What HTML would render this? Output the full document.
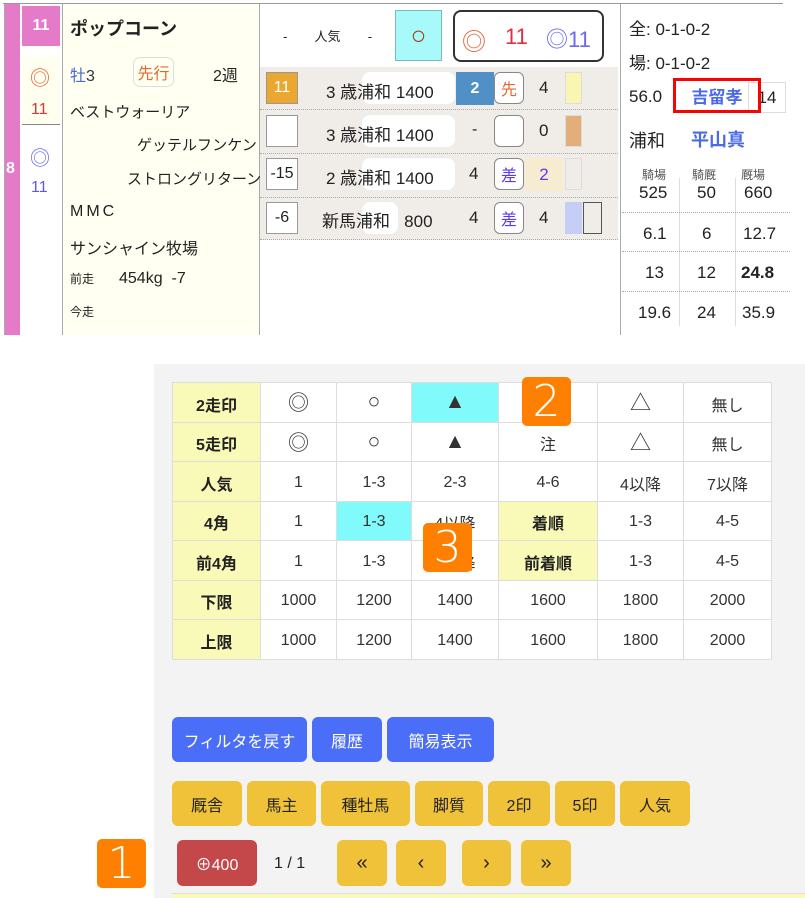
<!DOCTYPE html>
<html><head><meta charset="utf-8"><style>
*{margin:0;padding:0;box-sizing:border-box}
body{width:805px;height:898px;background:#fff;font-family:"Liberation Sans","Noto Sans CJK JP",sans-serif;color:#222;position:relative;overflow:hidden}
.a{position:absolute;white-space:nowrap}
.c{display:flex;align-items:center;justify-content:center}
table{border-collapse:collapse;position:absolute;left:172px;top:382px}
td{border:1px solid #ddd;background:#fff;text-align:center;font-size:16px;height:39.5px;color:#333;padding-top:3px}
td.h{background:#fafab8;font-weight:bold;color:#222}
td.g{font-size:21px;padding-top:0}
.btn{position:absolute;border-radius:6px;display:flex;align-items:center;justify-content:center;font-size:16px}
.b{background:#4a6ef7;color:#fff;top:717px;height:45px}
.y{background:#f0c23a;color:#222;top:781px;height:45px}
.n{background:#f0c23a;color:#222;top:840px;height:46px;font-size:20px}
.badge{position:absolute;width:49px;height:49px;background:#ff8000;color:#fff;border-radius:5px;font-size:44px;display:flex;align-items:center;justify-content:center;font-family:"DejaVu Sans",sans-serif;font-weight:300}
.box{position:absolute;width:32px;height:32px;border:1px solid #999;background:#fff;font-size:16px}
.pill{position:absolute;background:#fff;border-radius:8px;height:32px}
.rb{position:absolute;width:30px;height:32px;border:1px solid #888;border-radius:6px;background:#fff;font-size:16px}
</style></head><body>
<div class="a" style="left:3px;top:3px;width:780px;height:1px;background:#999"></div>
<div class="a" style="left:4px;top:4px;width:16px;height:331px;background:#e57bc8;border-left:1px solid #aaa"></div>
<div class="a" style="left:6px;top:160px;color:#fff;font-size:16px;font-weight:bold">8</div>
<div class="a c" style="left:22px;top:6px;width:38px;height:40px;background:#e57bc8;color:#fff;font-weight:bold;font-size:16px">11</div>
<div class="a" style="left:22px;top:57px;width:38px;height:68px;background:#fffff0;border-bottom:1px solid #888"></div>
<div class="a" style="left:30px;top:62px;color:#e8603a;font-size:20px">◎</div>
<div class="a" style="left:31px;top:101px;color:#e03030;font-size:16px">11</div>
<div class="a" style="left:30px;top:142px;color:#6a6af0;font-size:20px">◎</div>
<div class="a" style="left:31px;top:179px;color:#5a5af0;font-size:16px">11</div>
<div class="a" style="left:62px;top:4px;width:198px;height:331px;background:#fffff2;border-left:1px solid #aaa;border-right:1px solid #aaa"></div>
<div class="a" style="left:70px;top:15px;font-weight:bold;font-size:18px">ポップコーン</div>
<div class="a" style="left:70px;top:62px;font-size:16px;color:#4a6ad0">牡<span style="color:#333">3</span></div>
<div class="a c" style="left:133px;top:57px;width:41px;height:30px;border:1px solid #ddd;border-radius:7px;color:#e06a30;font-size:16px">先行</div>
<div class="a" style="left:213px;top:62px;font-size:16px">2週</div>
<div class="a" style="left:70px;top:101px;font-size:15px">ベストウォーリア</div>
<div class="a" style="left:137px;top:134px;font-size:15px">ゲッテルフンケン</div>
<div class="a" style="left:127px;top:168px;font-size:15px">ストロングリターン</div>
<div class="a" style="left:70px;top:203px;font-size:16px;letter-spacing:3px">MMC</div>
<div class="a" style="left:70px;top:235px;font-size:16px">サンシャイン牧場</div>
<div class="a" style="left:70px;top:270px;font-size:12px">前走</div>
<div class="a" style="left:119px;top:270px;font-size:16px">454kg&nbsp; -7</div>
<div class="a" style="left:70px;top:303px;font-size:12px">今走</div>
<div class="a" style="left:283px;top:26px;font-size:13px;word-spacing:10px">-&nbsp;&nbsp;人気&nbsp;&nbsp;-&nbsp;&nbsp;着</div>
<div class="a c" style="left:395px;top:10px;width:47px;height:51px;background:#a8fafa;border:1px solid #7bb;color:#a04010;font-size:26px">○</div>
<div class="a" style="left:453px;top:10px;width:151px;height:52px;border:2px solid #333;border-radius:8px"></div>
<div class="a" style="left:462px;top:22px;font-size:24px;color:#e8603a">◎</div>
<div class="a" style="left:505px;top:24px;font-size:22px;color:#e03040">11</div>
<div class="a" style="left:546px;top:22px;font-size:22px;color:#6a6af0">◎11</div>
<div class="a" style="left:260px;top:67px;width:358px;height:173px;background:#f0ece8"></div>
<div class="a" style="left:260px;top:109px;width:358px;border-top:1px dotted #aaa"></div>
<div class="a" style="left:260px;top:153px;width:358px;border-top:1px dotted #aaa"></div>
<div class="a" style="left:260px;top:197px;width:358px;border-top:1px dotted #aaa"></div>
<div class="a" style="left:260px;top:239px;width:358px;border-top:1px dotted #aaa"></div>
<div class="pill" style="left:362px;top:72px;width:93px"></div>
<div class="pill" style="left:362px;top:115px;width:93px"></div>
<div class="pill" style="left:362px;top:158px;width:93px"></div>
<div class="pill" style="left:362px;top:202px;width:36px"></div>
<div class="box c" style="left:266px;top:72px;background:#eaa830;color:#fff">11</div>
<div class="box" style="left:266px;top:115px"></div>
<div class="box c" style="left:266px;top:158px">-15</div>
<div class="box c" style="left:266px;top:202px">-6</div>
<div class="a" style="left:326px;top:78px;font-size:17px">3 歳浦和 1400</div>
<div class="a" style="left:326px;top:121px;font-size:17px">3 歳浦和 1400</div>
<div class="a" style="left:326px;top:164px;font-size:17px">2 歳浦和 1400</div>
<div class="a" style="left:322px;top:207px;font-size:17px">新馬浦和 &nbsp;&nbsp;800</div>
<div class="a c" style="left:456px;top:72px;width:38px;height:33px;background:#5090c6;color:#fff;font-weight:bold;font-size:16px">2</div>
<div class="a" style="left:472px;top:121px;font-size:16px">-</div>
<div class="a" style="left:469px;top:164px;font-size:17px">4</div>
<div class="a" style="left:469px;top:208px;font-size:17px">4</div>
<div class="rb c" style="left:494px;top:72px;color:#e06a30">先</div>
<div class="rb" style="left:494px;top:115px"></div>
<div class="rb c" style="left:494px;top:158px;color:#5a3af0">差</div>
<div class="rb c" style="left:494px;top:202px;color:#5a3af0">差</div>
<div class="a" style="left:539px;top:78px;font-size:17px">4</div>
<div class="a" style="left:539px;top:121px;font-size:17px">0</div>
<div class="a c" style="left:525px;top:158px;width:38px;height:33px;background:#f8ecd0;color:#5a3af0;font-size:17px">2</div>
<div class="a" style="left:539px;top:208px;font-size:17px">4</div>
<div class="a" style="left:565px;top:72px;width:17px;height:32px;background:#f8f6b0;border:1px solid #ddd"></div>
<div class="a" style="left:565px;top:115px;width:17px;height:32px;background:#e2ae7a;border:1px solid #ddd"></div>
<div class="a" style="left:565px;top:158px;width:17px;height:32px;border:1px solid #ddd"></div>
<div class="a" style="left:565px;top:202px;width:17px;height:32px;background:#c5cff5"></div>
<div class="a" style="left:583px;top:202px;width:19px;height:32px;border:1px solid #555"></div>
<div class="a" style="left:620px;top:4px;width:1px;height:331px;background:#aaa"></div>
<div class="a" style="left:629px;top:15px;font-size:17px">全: 0-1-0-2</div>
<div class="a" style="left:629px;top:49px;font-size:17px">場: 0-1-0-2</div>
<div class="a" style="left:629px;top:87px;font-size:17px">56.0</div>
<div class="a c" style="left:748px;top:82px;width:38px;height:31px;border:1px solid #ddd;font-size:17px">14</div>
<div class="a c" style="left:673px;top:78px;width:88px;height:35px;border:3px solid #f00;color:#4a6ae8;font-weight:bold;font-size:17px">吉留孝</div>
<div class="a" style="left:629px;top:127px;font-size:18px">浦和</div>
<div class="a" style="left:691px;top:126px;font-size:18px;font-weight:bold;color:#4a6ae8">平山真</div>
<div class="a" style="left:642px;top:166px;font-size:12px;color:#555">騎場</div>
<div class="a" style="left:692px;top:166px;font-size:12px;color:#555">騎厩</div>
<div class="a" style="left:741px;top:166px;font-size:12px;color:#555">厩場</div>
<div class="a" style="left:679px;top:178px;width:1px;height:148px;background:#ddd"></div>
<div class="a" style="left:735px;top:178px;width:1px;height:148px;background:#ddd"></div>
<div class="a" style="left:622px;top:212px;width:168px;border-top:1px dotted #aaa"></div>
<div class="a" style="left:622px;top:251px;width:168px;border-top:1px dotted #aaa"></div>
<div class="a" style="left:622px;top:291px;width:168px;border-top:1px dotted #aaa"></div>
<div class="a" style="left:639px;top:183px;font-size:17px">525</div><div class="a" style="left:697px;top:183px;font-size:17px">50</div><div class="a" style="left:744px;top:183px;font-size:17px">660</div>
<div class="a" style="left:643px;top:224px;font-size:17px">6.1</div><div class="a" style="left:702px;top:224px;font-size:17px">6</div><div class="a" style="left:743px;top:224px;font-size:17px">12.7</div>
<div class="a" style="left:645px;top:263px;font-size:17px">13</div><div class="a" style="left:697px;top:263px;font-size:17px">12</div><div class="a" style="left:741px;top:263px;font-size:17px;font-weight:bold">24.8</div>
<div class="a" style="left:638px;top:303px;font-size:17px">19.6</div><div class="a" style="left:697px;top:303px;font-size:17px">24</div><div class="a" style="left:742px;top:303px;font-size:17px">35.9</div>
<div class="a" style="left:154px;top:364px;width:651px;height:534px;background:#f3f3f3"></div>
<table>
<tr><td class="h" style="width:88px">2走印</td><td class="g" style="width:76px">◎</td><td class="g" style="width:75px">○</td><td class="g" style="width:87px;background:#80fafa">▲</td><td style="width:99px"></td><td class="g" style="width:86px">△</td><td style="width:88px">無し</td></tr>
<tr><td class="h">5走印</td><td class="g">◎</td><td class="g">○</td><td class="g">▲</td><td>注</td><td class="g">△</td><td>無し</td></tr>
<tr><td class="h">人気</td><td>1</td><td>1-3</td><td>2-3</td><td>4-6</td><td>4以降</td><td>7以降</td></tr>
<tr><td class="h">4角</td><td>1</td><td style="background:#80fafa">1-3</td><td>4以降</td><td class="h">着順</td><td>1-3</td><td>4-5</td></tr>
<tr><td class="h">前4角</td><td>1</td><td>1-3</td><td>4以降</td><td class="h">前着順</td><td>1-3</td><td>4-5</td></tr>
<tr><td class="h">下限</td><td>1000</td><td>1200</td><td>1400</td><td>1600</td><td>1800</td><td>2000</td></tr>
<tr><td class="h">上限</td><td>1000</td><td>1200</td><td>1400</td><td>1600</td><td>1800</td><td>2000</td></tr>
</table>
<div class="badge" style="left:522px;top:377px">2</div>
<div class="badge" style="left:423px;top:523px">3</div>
<div class="badge" style="left:97px;top:839px">1</div>
<div class="btn b" style="left:172px;width:135px">フィルタを戻す</div>
<div class="btn b" style="left:312px;width:70px">履歴</div>
<div class="btn b" style="left:387px;width:107px">簡易表示</div>
<div class="btn y" style="left:172px;width:70px">厩舎</div>
<div class="btn y" style="left:247px;width:69px">馬主</div>
<div class="btn y" style="left:321px;width:89px">種牡馬</div>
<div class="btn y" style="left:415px;width:68px">脚質</div>
<div class="btn y" style="left:488px;width:62px">2印</div>
<div class="btn y" style="left:555px;width:60px">5印</div>
<div class="btn y" style="left:620px;width:70px">人気</div>
<div class="btn" style="left:177px;top:840px;width:80px;height:46px;background:#c4474a;color:#fff;font-size:16px">⊕400</div>
<div class="a" style="left:274px;top:855px;font-size:16px">1 / 1</div>
<div class="btn n" style="left:337px;width:50px">«</div>
<div class="btn n" style="left:396px;width:50px">‹</div>
<div class="btn n" style="left:462px;width:49px">›</div>
<div class="btn n" style="left:521px;width:50px">»</div>
<div class="a" style="left:172px;top:893px;width:633px;height:5px;background:#fafab8;border-top:1px solid #ddd"></div>
</body></html>
